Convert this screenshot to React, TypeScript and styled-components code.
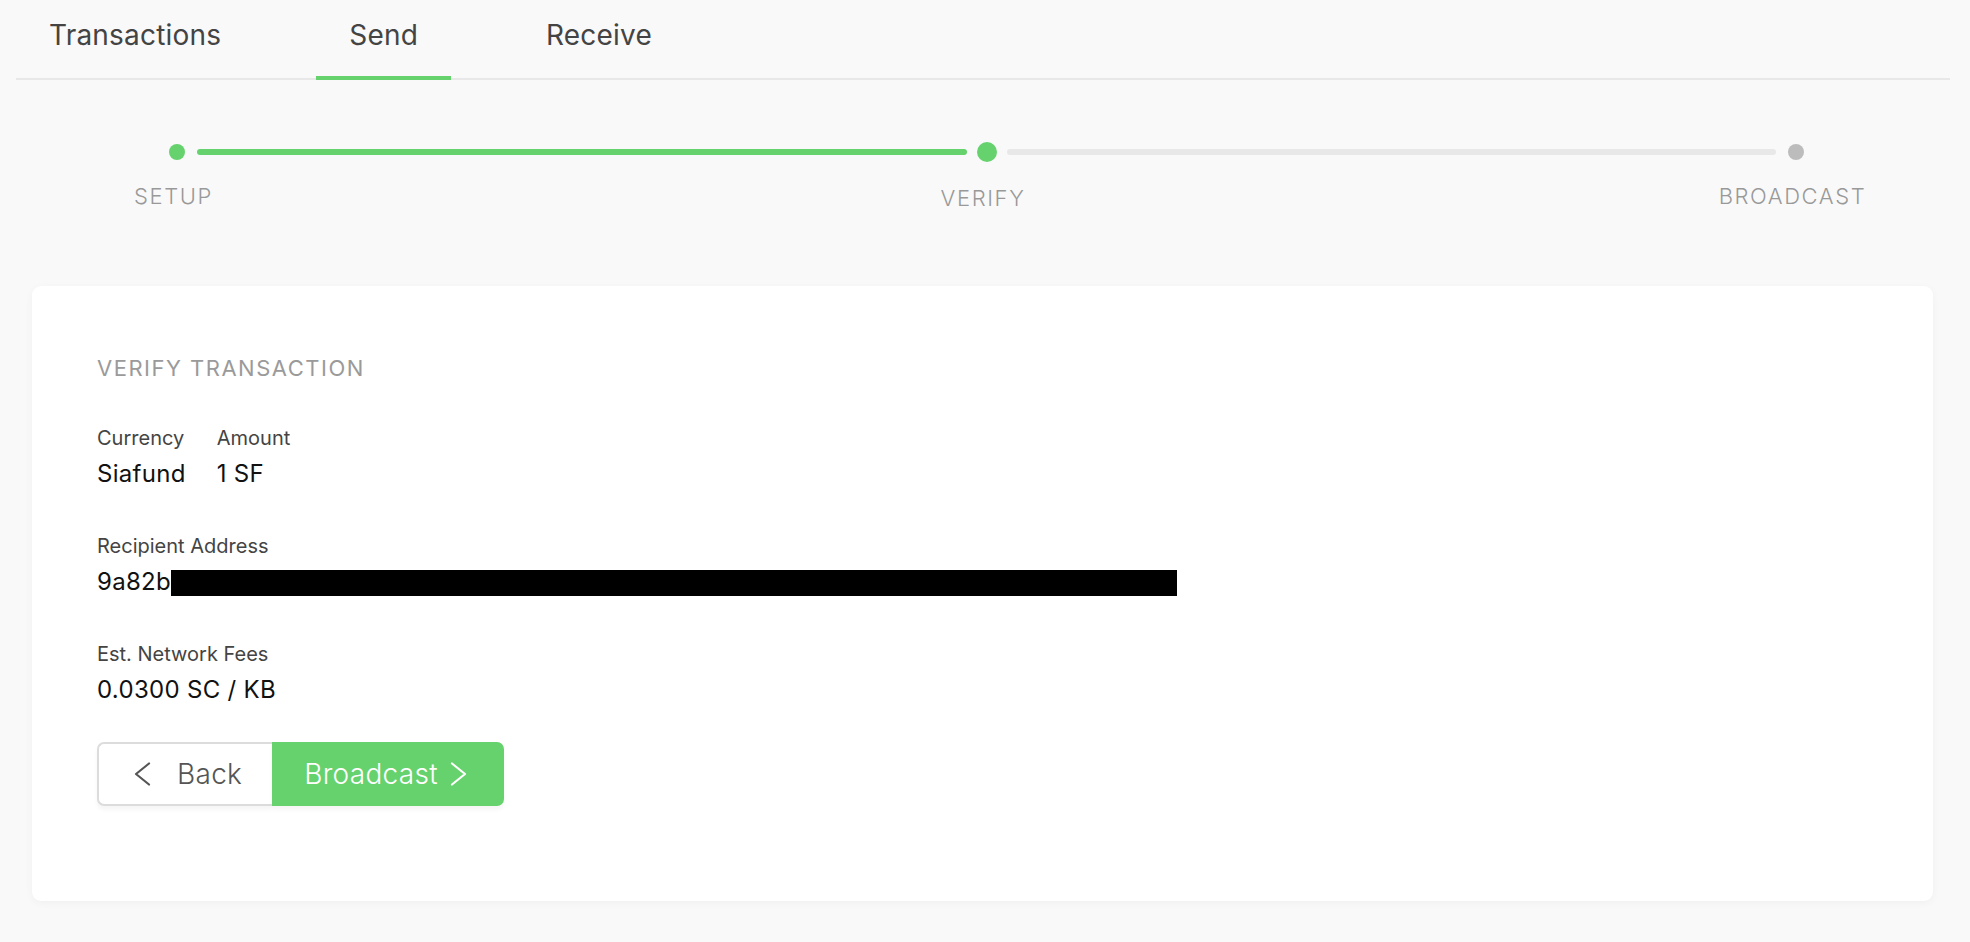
import React from 'react';
import styled, { createGlobalStyle } from 'styled-components';

const green = '#66d26e';

const GlobalStyle = createGlobalStyle`
  html, body {
    margin: 0;
    padding: 0;
    background: #f9f9f9;
    font-family: Inter, "Open Sans", sans-serif;
    -webkit-font-smoothing: antialiased;
  }
  * {
    box-sizing: border-box;
  }
`;

const Page = styled.div`
  min-height: 942px;
  background: #f9f9f9;
  overflow: hidden;
`;

const TabBar = styled.nav`
  display: flex;
  gap: 62px;
  margin: 0 20px 0 16px;
  border-bottom: 2px solid #e8e8e8;
`;

const Tab = styled.div<{ $active?: boolean }>`
  padding: 18px 33px 24px;
  margin-bottom: -2px;
  font-size: 28px;
  line-height: 34px;
  color: #444;
  letter-spacing: 0.2px;
  border-bottom: 4px solid ${p => (p.$active ? green : 'transparent')};
  cursor: pointer;
`;

const Stepper = styled.div`
  display: flex;
  align-items: flex-start;
  margin: 62px 164px 0 167px;
`;

const Step = styled.div`
  width: 20px;
  display: flex;
  flex-direction: column;
  align-items: center;
`;

const Dot = styled.div<{ $size: number; $color: string }>`
  width: ${p => p.$size}px;
  height: ${p => p.$size}px;
  margin-top: ${p => (20 - p.$size) / 2}px;
  border-radius: 50%;
  background: ${p => p.$color};
  flex-shrink: 0;
`;

const StepLabel = styled.div`
  margin: 23px 7px 0 0;
  font-size: 22px;
  line-height: 26px;
  font-weight: 300;
  letter-spacing: 1.6px;
  color: #999;
  white-space: nowrap;
`;

const Connector = styled.div<{ $done?: boolean }>`
  flex: 1;
  height: 6px;
  margin: 7px 10px 0;
  border-radius: 3px;
  background: ${p => (p.$done ? green : '#e8e8e8')};
`;

const Card = styled.section`
  margin: 75px 37px 41px 32px;
  padding: 69px 65px 95px;
  background: #fff;
  border-radius: 9px;
  box-shadow: 0 2px 8px rgba(0, 0, 0, 0.04);
`;

const Title = styled.h2`
  margin: 0 0 45px;
  font-size: 22px;
  line-height: 26px;
  font-weight: 400;
  letter-spacing: 1.5px;
  color: #9a9a9a;
`;

const FieldRow = styled.div`
  display: flex;
  gap: 31px;
  margin-bottom: 45px;
`;

const Field = styled.div`
  display: flex;
  flex-direction: column;
  gap: 9px;
`;

const Label = styled.div`
  font-size: 20px;
  line-height: 24px;
  color: #444;
`;

const Value = styled.div`
  display: flex;
  align-items: center;
  font-size: 24px;
  line-height: 30px;
  letter-spacing: 0.3px;
  color: #111;
`;

const Redacted = styled.span<{ $width: number }>`
  display: inline-block;
  width: ${p => p.$width}px;
  height: 26px;
  margin-top: 2px;
  background: #000;
`;

const Buttons = styled.div`
  display: flex;
  margin-top: -8px;
`;

const Button = styled.button<{ $primary?: boolean }>`
  display: flex;
  align-items: center;
  height: 64px;
  font-family: inherit;
  font-size: 28px;
  font-weight: 300;
  letter-spacing: 0.3px;
  cursor: pointer;
  box-shadow: 0 4px 4px rgba(0, 0, 0, 0.04);
  ${p =>
    p.$primary
      ? `
    gap: 12px;
    padding: 0 37px 0 32px;
    color: #fff;
    background: ${green};
    border: none;
    border-radius: 0 7px 7px 0;
  `
      : `
    gap: 26px;
    padding: 0 30px 0 35px;
    color: #555;
    background: #fff;
    border: 2px solid #dcdcdc;
    border-right: none;
    border-radius: 7px 0 0 7px;
  `}
`;

const Chevron = ({ dir, color }: { dir: 'left' | 'right'; color: string }) => (
  <svg width="17" height="24" viewBox="0 0 17 24" fill="none">
    <polyline
      points={dir === 'left' ? '15,1.5 2,12 15,22.5' : '2,1.5 15,12 2,22.5'}
      stroke={color}
      strokeWidth="2.2"
      strokeLinecap="round"
      strokeLinejoin="round"
    />
  </svg>
);

const steps = [
  { label: 'SETUP', size: 16, color: green },
  { label: 'VERIFY', size: 20, color: green },
  { label: 'BROADCAST', size: 16, color: '#bcbcbc' },
];

export default function App() {
  return (
    <Page>
      <GlobalStyle />
      <TabBar>
        <Tab>Transactions</Tab>
        <Tab $active>Send</Tab>
        <Tab>Receive</Tab>
      </TabBar>

      <Stepper>
        {steps.map((s, i) => (
          <React.Fragment key={s.label}>
            {i > 0 && <Connector $done={i === 1} />}
            <Step>
              <Dot $size={s.size} $color={s.color} />
              <StepLabel>{s.label}</StepLabel>
            </Step>
          </React.Fragment>
        ))}
      </Stepper>

      <Card>
        <Title>VERIFY TRANSACTION</Title>
        <FieldRow>
          <Field>
            <Label>Currency</Label>
            <Value>Siafund</Value>
          </Field>
          <Field>
            <Label>Amount</Label>
            <Value>1 SF</Value>
          </Field>
        </FieldRow>
        <FieldRow>
          <Field>
            <Label>Recipient Address</Label>
            <Value>
              9a82b
              <Redacted $width={1006} />
            </Value>
          </Field>
        </FieldRow>
        <FieldRow>
          <Field>
            <Label>Est. Network Fees</Label>
            <Value>0.0300 SC / KB</Value>
          </Field>
        </FieldRow>
        <Buttons>
          <Button>
            <Chevron dir="left" color="#555" />
            Back
          </Button>
          <Button $primary>
            Broadcast
            <Chevron dir="right" color="#fff" />
          </Button>
        </Buttons>
      </Card>
    </Page>
  );
}
